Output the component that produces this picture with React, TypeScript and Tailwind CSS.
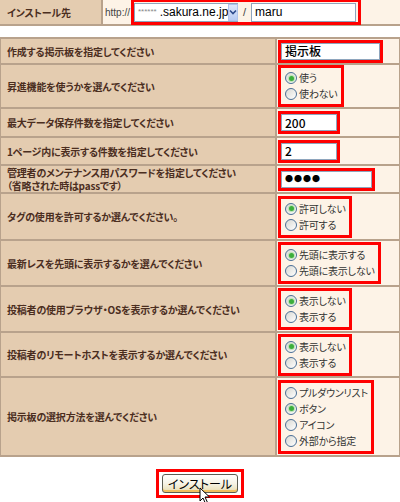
import React from "react";

const jp = "font-['Noto_Sans_CJK_JP',sans-serif] [font-feature-settings:'palt']";

function Radio({ checked, label }: { checked?: boolean; label: string }) {
  return (
    <div className="flex h-4 items-center gap-[2px]">
      <span className="flex size-[12px] items-center justify-center rounded-full border border-[#4a6f96] bg-gradient-to-br from-[#d8d8d2] to-white">
        {checked ? <span className="size-[5px] rounded-full bg-[#3cae3c] shadow-[0_0_1px_1px_#b6e0b0]" /> : null}
      </span>
      <span className="text-[10px] leading-none tracking-[-0.2px] text-[#333]">{label}</span>
    </div>
  );
}

function RedBox({ children, className = "" }: { children: React.ReactNode; className?: string }) {
  return <div className={`border-[3px] border-[#f00] ${className}`}>{children}</div>;
}

function TextBox({ value, width, dots }: { value: string; width: string; dots?: boolean }) {
  return (
    <RedBox className="p-0">
      <div
        className={`flex h-[17px] items-center border border-[#8ea5bd] bg-white px-[3px] text-black ${width} ${dots ? "text-[8px] tracking-[1px]" : "text-[12px] font-medium"}`}
      >
        {value}
      </div>
    </RedBox>
  );
}

function Radios({ items, checked }: { items: string[]; checked: number }) {
  return (
    <RedBox className="px-[4px] py-[2px] pr-[3px]">
      {items.map((label, i) => (
        <Radio key={label} label={label} checked={i === checked} />
      ))}
    </RedBox>
  );
}

type Row = { label: React.ReactNode; h: string; field: React.ReactNode };

const rows: Row[] = [
  { label: "作成する掲示板を指定してください", h: "h-[26px]", field: <TextBox value="掲示板" width="w-[99px]" /> },
  { label: "昇進機能を使うかを選んでください", h: "h-[44px]", field: <Radios items={["使う", "使わない"]} checked={0} /> },
  { label: "最大データ保存件数を指定してください", h: "h-[29px]", field: <TextBox value="200" width="w-[56px]" /> },
  { label: "1ページ内に表示する件数を指定してください", h: "h-[28px]", field: <TextBox value="2" width="w-[56px]" /> },
  {
    label: (
      <>
        管理者のメンテナンス用パスワードを指定してください
        <br />
        （省略された時はpassです）
      </>
    ),
    h: "h-[28px]",
    field: <TextBox value="●●●●" width="w-[91px]" dots />,
  },
  { label: "タグの使用を許可するか選んでください。", h: "h-[47px]", field: <Radios items={["許可しない", "許可する"]} checked={0} /> },
  { label: "最新レスを先頭に表示するかを選んでください", h: "h-[46px]", field: <Radios items={["先頭に表示する", "先頭に表示しない"]} checked={0} /> },
  { label: "投稿者の使用ブラウザ・OSを表示するか選んでください", h: "h-[46px]", field: <Radios items={["表示しない", "表示する"]} checked={0} /> },
  { label: "投稿者のリモートホストを表示するか選んでください", h: "h-[45px]", field: <Radios items={["表示しない", "表示する"]} checked={0} /> },
  {
    label: "掲示板の選択方法を選んでください",
    h: "h-[79px]",
    field: <Radios items={["プルダウンリスト", "ボタン", "アイコン", "外部から指定"]} checked={1} />,
  },
];

export default function App() {
  return (
    <div className={`h-[502px] w-[400px] overflow-hidden bg-white ${jp}`}>
      {/* インストール先 */}
      <div className="flex h-[26px] border-b-2 border-[#b8a28c]">
        <div className="flex w-[103px] shrink-0 items-center border-r-2 border-[#b8a28c] bg-[#e4ccb0] pl-[7px] text-[10px] font-bold tracking-[-0.2px] text-[#4b2e1f]">
          インストール先
        </div>
        <div className="flex flex-1 items-center bg-[#fdf3e7] pl-[2px]">
          <span className="w-[26px] overflow-hidden font-['Liberation_Sans',sans-serif] text-[10px] whitespace-nowrap text-[#444]">http://</span>
          <RedBox className="flex h-[26px] items-center gap-[5px] pl-[0px] pr-[2px]">
            <div className="flex h-[19px] w-[104px] items-center border border-[#8ea5bd] bg-white pl-[3px]">
              <span className="font-['Liberation_Sans',sans-serif] text-[8px] text-[#888]">******</span>
              <span className="ml-[3px] flex-1 font-['Liberation_Sans',sans-serif] text-[12px] text-black">.sakura.ne.jp</span>
              <span className="flex h-[17px] w-[12px] items-center justify-center border border-[#b0c4ec] bg-gradient-to-b from-[#dfe8fb] to-[#b9cbf3]">
                <svg width="8" height="6" viewBox="0 0 8 6">
                  <path d="M1 1.5 L4 4.5 L7 1.5" stroke="#2d4a8c" strokeWidth="1.6" fill="none" />
                </svg>
              </span>
            </div>
            <span className="font-['Liberation_Sans',sans-serif] text-[11px] text-[#444]">/</span>
            <div className="flex h-[19px] w-[105px] items-center border border-[#8ea5bd] bg-white px-[3px] font-['Liberation_Sans',sans-serif] text-[12px] text-black">
              maru
            </div>
          </RedBox>
        </div>
      </div>

      {/* 設定 */}
      <div className="mt-[11px] border-x border-t-2 border-[#b8a28c]">
        {rows.map((row, i) => (
          <div key={i} className={`flex ${row.h} border-b-2 border-[#b8a28c]`}>
            <div className="flex w-[276px] shrink-0 items-center border-r-2 border-[#b8a28c] bg-[#e4ccb0] pl-[6px] text-[10px] leading-[13px] font-bold tracking-[-0.2px] text-[#4b2e1f]">
              <div>{row.label}</div>
            </div>
            <div className="flex flex-1 items-center bg-[#fdf3e7] pl-[1px]">{row.field}</div>
          </div>
        ))}
      </div>

      {/* インストールボタン */}
      <div className="mt-[12px] flex justify-center">
        <div className="relative">
          <RedBox className="px-[3px] py-[2px]">
            <button
              type="button"
              className="flex h-[19px] w-[76px] items-center justify-center rounded-[3px] border border-[#5d5d52] bg-gradient-to-b from-white via-[#f6f3e6] to-[#e9ddb0] text-[12px] text-black shadow-[inset_0_-2px_0_#f0c060]"
            >
              インストール
            </button>
          </RedBox>
          <svg className="absolute left-[43px] top-[18px]" width="12" height="18" viewBox="0 0 12 18">
            <path d="M1 1 L1 14 L4 11 L6.5 16.5 L8.5 15.5 L6 10 L10.5 10 Z" fill="white" stroke="black" strokeWidth="1" strokeLinejoin="round" />
          </svg>
        </div>
      </div>
    </div>
  );
}
